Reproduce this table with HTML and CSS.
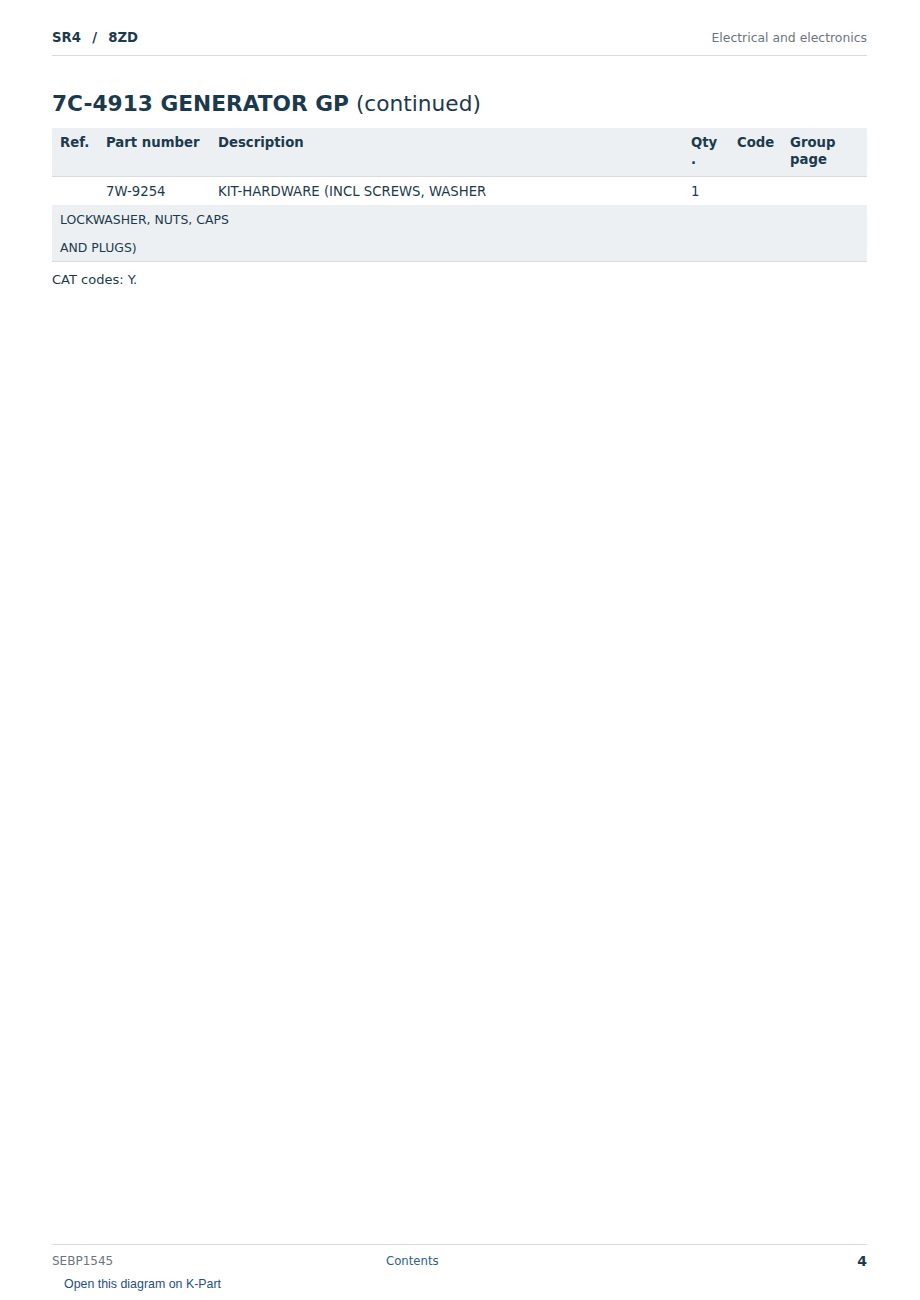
FILE: index.html
```html
<!DOCTYPE html>
<html>
<head>
<meta charset="utf-8">
<link rel="stylesheet" href="styles.css">
</head>
<body>
<div class="page">
  <header class="top">
    <div class="crumb">SR4 &nbsp;<span class="sep">/</span>&nbsp; 8ZD</div>
    <div class="section">Electrical and electronics</div>
  </header>
  <h1 class="title"><strong>7C-4913 GENERATOR GP</strong> <span class="cont">(continued)</span></h1>
  <table class="parts">
    <colgroup>
      <col class="c-ref"><col class="c-pn"><col class="c-desc"><col class="c-qty"><col class="c-code"><col class="c-grp">
    </colgroup>
    <thead>
      <tr>
        <th>Ref.</th><th>Part number</th><th>Description</th><th class="qty">Qty.</th><th>Code</th><th>Group page</th>
      </tr>
    </thead>
    <tbody>
      <tr class="item">
        <td></td><td>7W-9254</td><td>KIT-HARDWARE (INCL SCREWS, WASHER</td><td>1</td><td></td><td></td>
      </tr>
      <tr class="note">
        <td colspan="6">LOCKWASHER, NUTS, CAPS<br>AND PLUGS)</td>
      </tr>
    </tbody>
  </table>
  <p class="cat">CAT codes: Y.</p>
  <footer class="foot">
    <div class="foot-row">
      <span class="doc">SEBP1545</span>
      <a class="contents">Contents</a>
      <span class="pg">4</span>
    </div>
    <a class="kpart">Open this diagram on K-Part</a>
  </footer>
</div>
</body>
</html>
```
FILE: styles.css
```css
html, body {
  margin: 0;
  padding: 0;
  background: #ffffff;
}
body {
  font-family: "DejaVu Sans", sans-serif;
  color: #1c3a4e;
}
.page {
  width: 815px;
  margin: 0 0 0 52px;
  min-height: 1300px;
  display: flex;
  flex-direction: column;
  box-sizing: border-box;
}
.top {
  display: flex;
  justify-content: space-between;
  align-items: center;
  padding: 29px 0 9px;
  line-height: 17px;
  border-bottom: 1px solid #d8dce0;
}
.crumb {
  font-size: 13.25px;
  font-weight: bold;
  color: #1c3a4e;
}
.crumb .sep {
  margin: 0 2px;
}
.section {
  font-size: 12.4px;
  color: #6b7580;
}
.title {
  margin: 35px 0 12px;
  font-size: 21.7px;
  line-height: normal;
  font-weight: normal;
  color: #1c3a4e;
}
.title strong {
  font-weight: bold;
}
.parts {
  width: 100%;
  border-collapse: collapse;
  table-layout: fixed;
  font-size: 13.25px;
}
.c-ref { width: 46px; }
.c-pn { width: 112px; }
.c-desc { width: 473px; }
.c-qty { width: 46px; }
.c-code { width: 53px; }
.c-grp { width: 85px; }
.parts th {
  background: #edf0f3;
  text-align: left;
  vertical-align: top;
  padding: 6px 8px 8px;
  line-height: 17px;
  font-weight: bold;
  border-bottom: 1px solid #d8dce0;
}
.parts th.qty {
  padding-right: 10px;
  overflow-wrap: anywhere;
}
.item td {
  height: 28px;
  box-sizing: border-box;
  padding: 1px 8px 0;
  line-height: 27px;
  white-space: nowrap;
}
.note td {
  background: #edf0f3;
  padding: 1px 8px 0;
  font-size: 12.45px;
  line-height: 27.5px;
  border-bottom: 1px solid #d8dce0;
}
.cat {
  margin: 9px 0 0;
  font-size: 13px;
  line-height: 17px;
}
.foot {
  margin-top: auto;
  border-top: 1px solid #d8dce0;
  padding: 8px 0 8px;
}
.foot-row {
  display: grid;
  grid-template-columns: 334px 1fr auto;
  align-items: center;
  line-height: 16px;
}
.doc {
  font-size: 12px;
  color: #6b7580;
}
.contents {
  font-size: 11.7px;
  color: #2a6090;
}
.pg {
  font-size: 14px;
  font-weight: bold;
  color: #1c3a4e;
}
.kpart {
  display: block;
  margin: 7px 0 0 12px;
  font-family: "Liberation Sans", Arial, sans-serif;
  font-size: 12.4px;
  line-height: 16px;
  color: #1f4f86;
}
```
